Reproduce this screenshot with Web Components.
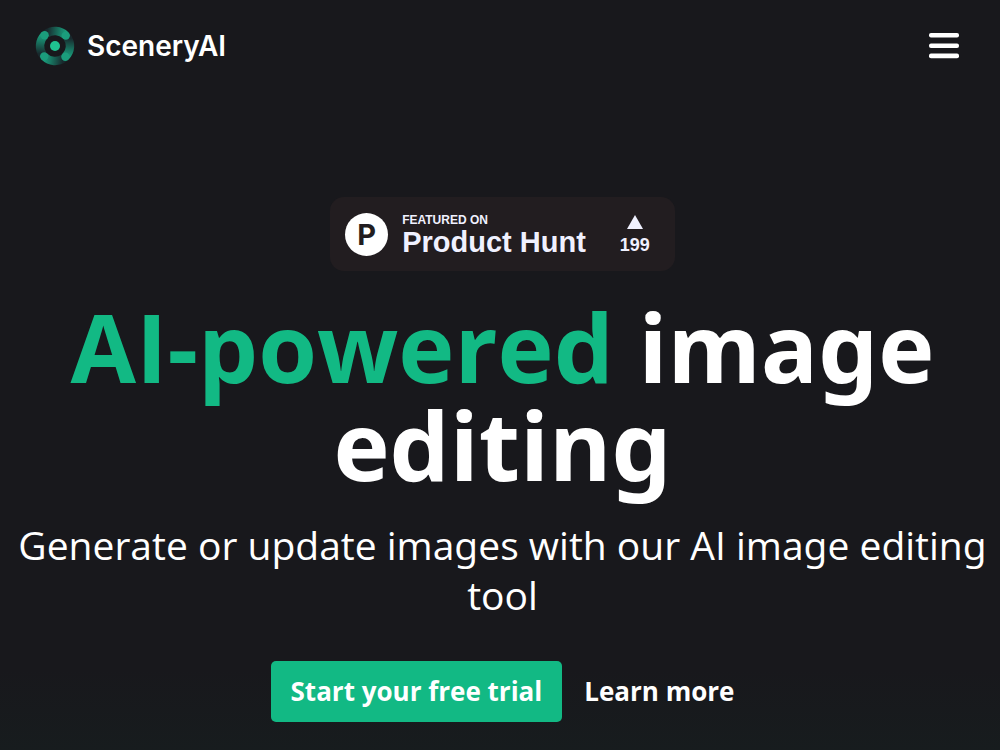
<!DOCTYPE html>
<html lang="en">
<head>
<meta charset="utf-8">
<meta name="viewport" content="width=device-width, initial-scale=1">
<title>SceneryAI</title>
<style>
  body { margin: 0; background: #18181c; color: #fff; font-family: "Open Sans", "Noto Sans", sans-serif; font-feature-settings: "ss02"; }
</style>
</head>
<body>
<scenery-page>
  <scenery-header slot="header"></scenery-header>
  <scenery-hero>
    <hunt-badge slot="badge" votes="199"></hunt-badge>
    <span slot="accent">AI-powered</span>
    <span slot="subject">image</span>
    <span slot="activity">editing</span>
    <span slot="lead">Generate or update images with our AI image editing tool</span>
    <action-link slot="actions" href="#trial" primary>Start your free trial</action-link>
    <action-link slot="actions" href="#features">Learn more</action-link>
  </scenery-hero>
</scenery-page>
<script>
const define = (name, html, setup) => customElements.define(name, class extends HTMLElement {
  constructor() {
    super();
    const t = document.createElement('template');
    t.innerHTML = html;
    this.attachShadow({ mode: 'open' }).append(t.content.cloneNode(true));
  }
  connectedCallback() { if (setup) setup(this, this.shadowRoot); }
});

define('scenery-logo', `
<style>
  :host { display: block; }
  a { display: flex; align-items: center; gap: 12px; color: #fff; text-decoration: none;
      font: 600 28px/40px Inter, sans-serif; font-feature-settings: normal; }
  svg { display: block; }
</style>
<a href="#home">
  <svg width="40" height="40" viewBox="0 0 40 40" fill="none" aria-hidden="true">
    <defs>
      <linearGradient id="fade" gradientUnits="userSpaceOnUse" x1="9" y1="9" x2="7" y2="28">
        <stop offset="0" stop-color="#1b9d7c"/><stop offset=".35" stop-color="#187a64"/><stop offset="1" stop-color="#18292d"/>
      </linearGradient>
      <path id="tail" d="M9.4 9.4A15 15 0 0 0 8 29" stroke="url(#fade)" stroke-width="8.4"/>
      <circle id="head" cx="9.6" cy="9.2" r="4.2" fill="#1b9d7c"/>
    </defs>
    <use href="#tail"/>
    <use href="#tail" transform="rotate(90 20 20)"/>
    <use href="#tail" transform="rotate(180 20 20)"/>
    <use href="#tail" transform="rotate(270 20 20)"/>
    <use href="#head"/>
    <use href="#head" transform="rotate(90 20 20)"/>
    <use href="#head" transform="rotate(180 20 20)"/>
    <use href="#head" transform="rotate(270 20 20)"/>
    <circle cx="20" cy="20" r="5" fill="#1fc290"/>
  </svg>
  <span>SceneryAI</span>
</a>`);

define('scenery-header', `
<style>
  :host { display: block; }
  header { display: flex; align-items: center; justify-content: space-between; padding: 26px 40px 25px 35px; }
  button { display: block; padding: 0; border: 0; background: none; color: #fff; cursor: pointer; }
  svg { display: block; }
</style>
<header>
  <scenery-logo></scenery-logo>
  <button type="button" aria-label="Open menu">
    <svg width="32" height="28" viewBox="0 0 32 28" fill="currentColor" aria-hidden="true">
      <rect x="1" y="1" width="30" height="4.6" rx="2"/><rect x="1" y="11.4" width="30" height="4.6" rx="2"/><rect x="1" y="21.6" width="30" height="4.6" rx="2"/>
    </svg>
  </button>
</header>`);

define('hunt-badge', `
<style>
  :host { display: inline-block; }
  a { display: flex; align-items: center; box-sizing: border-box; height: 74px; padding: 0 25px 0 15px;
      border-radius: 14px; background: #221d20; color: #f0f1ff; text-decoration: none; text-align: left;
      font: 700 12px/14px "Liberation Sans", Arial, sans-serif; }
  .mark { width: 43px; height: 43px; border-radius: 50%; background: #fff; color: #221d20;
      font: 700 29px/43px Inter, sans-serif; text-align: center; }
  .copy { display: flex; flex-direction: column; margin-left: 14px; padding-top: 2px; }
  .name { font-size: 29px; line-height: 30px; }
  .votes { display: flex; flex-direction: column; align-items: center; gap: 6px; margin-left: 34px; padding-top: 2px; font-size: 18px; line-height: 20px; }
  svg { display: block; }
</style>
<a href="#product-hunt">
  <span class="mark">P</span>
  <span class="copy"><span>FEATURED ON</span><span class="name">Product Hunt</span></span>
  <span class="votes">
    <svg width="16" height="14" viewBox="0 0 16 14" fill="currentColor" aria-hidden="true"><path d="M8 0l8 14H0z"/></svg>
    <span id="count"></span>
  </span>
</a>`, (el, root) => { root.getElementById('count').textContent = el.getAttribute('votes'); });

define('action-link', `
<style>
  :host { display: block; }
  a { display: block; border-radius: 5px; color: #fff; text-decoration: none; white-space: nowrap;
      font-weight: 700; font-size: 26px; line-height: 61px; }
  :host([primary]) a { padding: 0 20px; background: #12b984; }
</style>
<a><slot></slot></a>`, (el, root) => { root.querySelector('a').href = el.getAttribute('href'); });

define('scenery-hero', `
<style>
  :host { display: block; }
  section { padding: 106px 0 28px 5px; text-align: center; }
  h1 { margin: 26px 0 0; font-size: 95px; line-height: 98px; font-weight: 700; }
  .accent { color: #12b984; }
  p { margin: 27px 0 0; font-size: 39px; line-height: 50px; }
  .actions { display: flex; justify-content: center; gap: 22px; margin-top: 41px; }
  slot[name=badge] { display: block; }
</style>
<section>
  <slot name="badge"></slot>
  <h1><span class="accent"><slot name="accent"></slot></span> <slot name="subject"></slot> <slot name="activity"></slot></h1>
  <p><slot name="lead"></slot></p>
  <div class="actions"><slot name="actions"></slot></div>
</section>`);

define('scenery-page', `
<style>
  :host { display: block; min-height: 100vh; background: linear-gradient(to top, #171c1e, #18181c 80px); }
</style>
<slot name="header"></slot>
<main><slot></slot></main>`);
</script>
</body>
</html>
